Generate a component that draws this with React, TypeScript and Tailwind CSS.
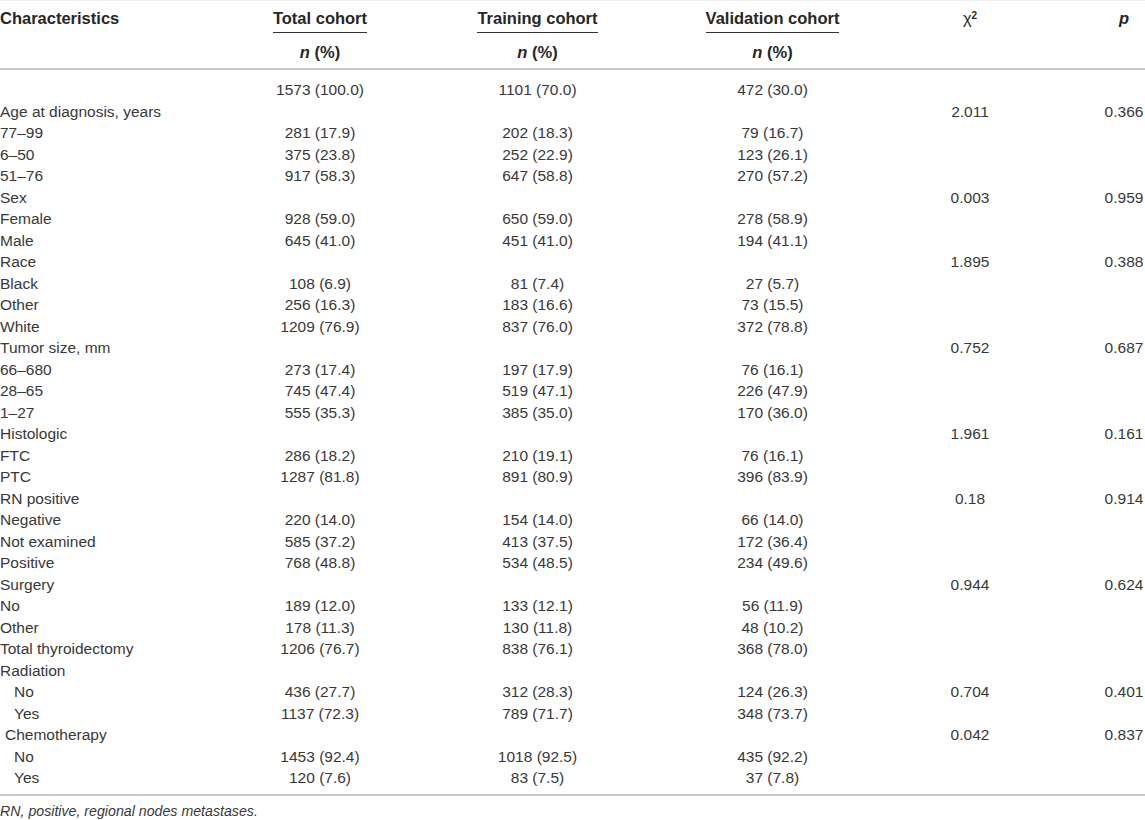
import React from "react";

type Row = {
  label: string;
  indent?: "sm" | "lg";
  total?: string;
  training?: string;
  validation?: string;
  chi?: string;
  p?: string;
};

const rows: Row[] = [
  { label: "", total: "1573 (100.0)", training: "1101 (70.0)", validation: "472 (30.0)" },
  { label: "Age at diagnosis, years", chi: "2.011", p: "0.366" },
  { label: "77–99", total: "281 (17.9)", training: "202 (18.3)", validation: "79 (16.7)" },
  { label: "6–50", total: "375 (23.8)", training: "252 (22.9)", validation: "123 (26.1)" },
  { label: "51–76", total: "917 (58.3)", training: "647 (58.8)", validation: "270 (57.2)" },
  { label: "Sex", chi: "0.003", p: "0.959" },
  { label: "Female", total: "928 (59.0)", training: "650 (59.0)", validation: "278 (58.9)" },
  { label: "Male", total: "645 (41.0)", training: "451 (41.0)", validation: "194 (41.1)" },
  { label: "Race", chi: "1.895", p: "0.388" },
  { label: "Black", total: "108 (6.9)", training: "81 (7.4)", validation: "27 (5.7)" },
  { label: "Other", total: "256 (16.3)", training: "183 (16.6)", validation: "73 (15.5)" },
  { label: "White", total: "1209 (76.9)", training: "837 (76.0)", validation: "372 (78.8)" },
  { label: "Tumor size, mm", chi: "0.752", p: "0.687" },
  { label: "66–680", total: "273 (17.4)", training: "197 (17.9)", validation: "76 (16.1)" },
  { label: "28–65", total: "745 (47.4)", training: "519 (47.1)", validation: "226 (47.9)" },
  { label: "1–27", total: "555 (35.3)", training: "385 (35.0)", validation: "170 (36.0)" },
  { label: "Histologic", chi: "1.961", p: "0.161" },
  { label: "FTC", total: "286 (18.2)", training: "210 (19.1)", validation: "76 (16.1)" },
  { label: "PTC", total: "1287 (81.8)", training: "891 (80.9)", validation: "396 (83.9)" },
  { label: "RN positive", chi: "0.18", p: "0.914" },
  { label: "Negative", total: "220 (14.0)", training: "154 (14.0)", validation: "66 (14.0)" },
  { label: "Not examined", total: "585 (37.2)", training: "413 (37.5)", validation: "172 (36.4)" },
  { label: "Positive", total: "768 (48.8)", training: "534 (48.5)", validation: "234 (49.6)" },
  { label: "Surgery", chi: "0.944", p: "0.624" },
  { label: "No", total: "189 (12.0)", training: "133 (12.1)", validation: "56 (11.9)" },
  { label: "Other", total: "178 (11.3)", training: "130 (11.8)", validation: "48 (10.2)" },
  { label: "Total thyroidectomy", total: "1206 (76.7)", training: "838 (76.1)", validation: "368 (78.0)" },
  { label: "Radiation" },
  { label: "No", indent: "lg", total: "436 (27.7)", training: "312 (28.3)", validation: "124 (26.3)", chi: "0.704", p: "0.401" },
  { label: "Yes", indent: "lg", total: "1137 (72.3)", training: "789 (71.7)", validation: "348 (73.7)" },
  { label: "Chemotherapy", indent: "sm", chi: "0.042", p: "0.837" },
  { label: "No", indent: "lg", total: "1453 (92.4)", training: "1018 (92.5)", validation: "435 (92.2)" },
  { label: "Yes", indent: "lg", total: "120 (7.6)", training: "83 (7.5)", validation: "37 (7.8)" },
];

const grid = "grid grid-cols-[210px_220px_215px_255px_140px_105px]";

export default function App() {
  return (
    <div
      className="w-[1145px] h-[820px] overflow-hidden bg-white text-[#383838] text-[15.5px]"
      style={{ fontFamily: '"Liberation Sans", Arial, sans-serif' }}
    >
      {/* Header */}
      <div className="border-t border-[#eeeeee] border-b-2 border-b-[#c9c9c9] font-bold text-[16.5px] text-[#262626]">
        <div className={`${grid} h-[32px] pt-[8px] leading-[19px]`}>
          <div>Characteristics</div>
          <div className="text-center">
            <span className="inline-block border-b border-[#333] pb-[4px]">Total cohort</span>
          </div>
          <div className="text-center">
            <span className="inline-block border-b border-[#333] pb-[4px]">Training cohort</span>
          </div>
          <div className="text-center">
            <span className="inline-block border-b border-[#333] pb-[4px]">Validation cohort</span>
          </div>
          <div className="text-center font-normal">
            χ<sup className="font-bold text-[10px]">2</sup>
          </div>
          <div className="text-center pl-[63px]">
            <i>p</i>
          </div>
        </div>
        <div className={`${grid} h-[35px] pt-[10px] leading-[19px]`}>
          <div />
          <div className="text-center"><i>n</i> (%)</div>
          <div className="text-center"><i>n</i> (%)</div>
          <div className="text-center"><i>n</i> (%)</div>
          <div />
          <div />
        </div>
      </div>

      {/* Body */}
      <div className="pt-[9px] pb-[5px] border-b-2 border-[#c9c9c9]">
        {rows.map((r, i) => (
          <div key={i} className={`${grid} h-[21.5px] leading-[21.5px] whitespace-nowrap`}>
            <div className={r.indent === "lg" ? "pl-[14px]" : r.indent === "sm" ? "pl-[5px]" : ""}>
              {r.label}
            </div>
            <div className="text-center">{r.total}</div>
            <div className="text-center">{r.training}</div>
            <div className="text-center">{r.validation}</div>
            <div className="text-center">{r.chi}</div>
            <div className="text-center pl-[63px]">{r.p}</div>
          </div>
        ))}
      </div>

      {/* Footnote */}
      <p className="pt-[6px] leading-[18px] text-[14.2px] italic">
        RN, positive, regional nodes metastases.
      </p>
    </div>
  );
}
